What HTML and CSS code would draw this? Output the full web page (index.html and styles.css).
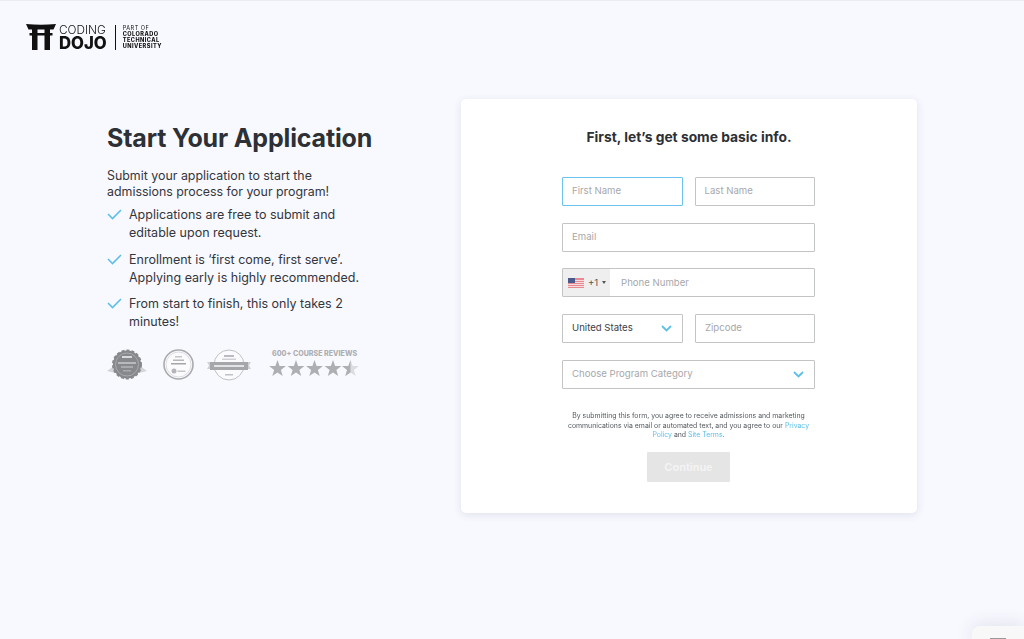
FILE: index.html
```html
<!DOCTYPE html>
<html lang="en">
<head>
  <meta charset="UTF-8">
  <title>Start Your Application | Coding Dojo</title>
  <link rel="stylesheet" href="styles.css">
</head>
<body>
  <header class="top">
    <div class="logo">
      <svg class="torii" width="30" height="26" viewBox="0 0 30 26">
        <path d="M0 0Q15 1.500 30 0L27.500 5.500H2.500Z" fill="#111"/>
        <rect x="3.500" y="9" width="23" height="2.500" fill="#111"/>
        <rect x="6" y="5" width="5.500" height="21" fill="#111"/>
        <rect x="18.500" y="5" width="5.500" height="21" fill="#111"/>
      </svg>
      <div class="logo-name">
        <span class="logo-coding">CODING</span>
        <span class="logo-dojo">DOJO</span>
      </div>
      <div class="logo-part">
        <span class="logo-of">PART OF</span>
        <span>COLORADO</span>
        <span>TECHNICAL</span>
        <span>UNIVERSITY</span>
      </div>
    </div>
  </header>

  <main class="main">
    <section class="intro">
      <h1>Start Your Application</h1>
      <p class="lead">Submit your application to start the admissions process for your program!</p>
      <ul class="checks">
        <li>
          <svg class="tick" width="15" height="11" viewBox="0 0 15 11"><path d="M1 5L5.500 9.500L14 1" fill="none" stroke="#5dbfe8" stroke-width="1.600"/></svg>
          <span>Applications are free to submit and editable upon request.</span>
        </li>
        <li>
          <svg class="tick" width="15" height="11" viewBox="0 0 15 11"><path d="M1 5L5.500 9.500L14 1" fill="none" stroke="#5dbfe8" stroke-width="1.600"/></svg>
          <span>Enrollment is ‘first come, first serve’. Applying early is highly recommended.</span>
        </li>
        <li>
          <svg class="tick" width="15" height="11" viewBox="0 0 15 11"><path d="M1 5L5.500 9.500L14 1" fill="none" stroke="#5dbfe8" stroke-width="1.600"/></svg>
          <span>From start to finish, this only takes 2 minutes!</span>
        </li>
      </ul>
      <div class="badges">
        <svg width="40" height="32" viewBox="0 0 40 32">
          <path d="M0 22L7 17L7 10L15 16L12 25ZM40 22L33 17L33 10L25 16L28 25Z" fill="#d3d4d8"/>
          <circle cx="20" cy="15.500" r="14" fill="#87888c" stroke="#87888c" stroke-width="2" stroke-dasharray="3 2"/>
          <circle cx="20" cy="15.500" r="11.500" fill="none" stroke="#a9aaae" stroke-width="1"/>
          <rect x="15" y="7" width="10" height="2" fill="#d8d9dc"/>
          <rect x="11" y="13" width="18" height="2" fill="#b8b9bc"/>
          <rect x="14" y="17" width="12" height="2" fill="#a9aaae"/>
          <rect x="16" y="21" width="8" height="1.500" fill="#a9aaae"/>
        </svg>
        <svg width="31" height="31" viewBox="0 0 31 31">
          <circle cx="15.500" cy="15.500" r="14.500" fill="#fbfbfd" stroke="#a9aaae" stroke-width="1.600"/>
          <circle cx="15.500" cy="15.500" r="12.500" fill="none" stroke="#dcdde0" stroke-width="1"/>
          <rect x="12" y="7" width="7" height="1.500" fill="#c5c6ca"/>
          <rect x="10" y="10.500" width="11" height="1.500" fill="#b5b6ba"/>
          <rect x="8" y="14" width="15" height="1.500" fill="#a5a6aa"/>
          <circle cx="11" cy="22" r="2.500" fill="#b5b6ba"/>
          <rect x="14.500" y="21.500" width="8" height="1.500" fill="#c5c6ca"/>
        </svg>
        <svg width="44" height="32" viewBox="0 0 44 32">
          <circle cx="22" cy="16" r="15" fill="#fbfbfd" stroke="#c0c1c5" stroke-width="1"/>
          <rect x="17" y="6" width="10" height="2" fill="#bbbcc0"/>
          <rect x="15" y="9.500" width="14" height="1.500" fill="#d0d1d5"/>
          <path d="M0 13H5V20H0L2 16.500Z" fill="#d0d1d5"/>
          <path d="M44 13H39V20H44L42 16.500Z" fill="#d0d1d5"/>
          <rect x="3" y="13" width="38" height="8" fill="#a5a6aa"/>
          <rect x="7" y="16" width="30" height="2" fill="#e2e3e6"/>
          <rect x="18" y="25" width="8" height="1.500" fill="#c0c1c5"/>
        </svg>
        <div class="reviews">
          <span class="reviews-title">600+ COURSE REVIEWS</span>
          <div class="stars">
            <svg width="90" height="17" viewBox="0 0 90 17">
              <defs>
                <path id="star" d="M8.500 0L10.600 5.900L16.900 6.100L11.900 9.900L13.700 16L8.500 12.400L3.300 16L5.100 9.900L0.100 6.100L6.400 5.900Z"/>
                <clipPath id="half"><rect x="0" y="0" width="8.500" height="17"/></clipPath>
              </defs>
              <use href="#star" x="0" fill="#aeafb3"/>
              <use href="#star" x="18.500" fill="#aeafb3"/>
              <use href="#star" x="37" fill="#aeafb3"/>
              <use href="#star" x="55.500" fill="#aeafb3"/>
              <use href="#star" x="73" fill="#dcdde0"/>
              <g transform="translate(73 0)"><use href="#star" fill="#aeafb3" clip-path="url(#half)"/></g>
            </svg>
          </div>
        </div>
      </div>
    </section>

    <section class="card">
      <h2>First, let’s get some basic info.</h2>
      <form class="form">
        <div class="row">
          <div class="field focus"><span class="ph">First Name</span></div>
          <div class="field"><span class="ph">Last Name</span></div>
        </div>
        <div class="field"><span class="ph">Email</span></div>
        <div class="field phone">
          <div class="dial">
            <svg width="16" height="10" viewBox="0 0 16 10">
              <rect width="16" height="10" fill="#e58b91"/>
              <rect y="2" width="16" height="1" fill="#f6dcdd"/>
              <rect y="4" width="16" height="1" fill="#f6dcdd"/>
              <rect y="6" width="16" height="1" fill="#f6dcdd"/>
              <rect y="8" width="16" height="1" fill="#f6dcdd"/>
              <rect width="7" height="5" fill="#4a5a8c"/>
            </svg>
            <span class="dial-code">+1</span>
            <span class="dial-caret"></span>
          </div>
          <span class="ph">Phone Number</span>
        </div>
        <div class="row">
          <div class="field select">
            <span class="val">United States</span>
            <svg width="11" height="7" viewBox="0 0 11 7"><path d="M1 1L5.500 5.500L10 1" fill="none" stroke="#5dbfe8" stroke-width="1.800"/></svg>
          </div>
          <div class="field"><span class="ph">Zipcode</span></div>
        </div>
        <div class="field select">
          <span class="ph">Choose Program Category</span>
          <svg width="11" height="7" viewBox="0 0 11 7"><path d="M1 1L5.500 5.500L10 1" fill="none" stroke="#5dbfe8" stroke-width="1.800"/></svg>
        </div>
        <p class="legal">By submitting this form, you agree to receive admissions and marketing communications via email or automated text, and you agree to our <a href="#">Privacy Policy</a> and <a href="#">Site Terms</a>.</p>
        <button class="continue" type="button" disabled>Continue</button>
      </form>
    </section>
  </main>

  <div class="corner"><span></span></div>
</body>
</html>
```

FILE: styles.css
```css
* {
  box-sizing: border-box;
}
html, body {
  height: 100%;
}
body {
  margin: 0;
  overflow: hidden;
  background: #f8f9ff;
  border-top: 1px solid #ebecf0;
  color: #33363b;
  font-family: "Inter", "Liberation Sans", sans-serif;
}
.top {
  padding: 23px 0 0 26px;
}
.logo {
  display: flex;
  align-items: center;
  height: 26px;
  color: #111;
  will-change: opacity;
}
.torii {
  flex: none;
}
.logo-name {
  display: flex;
  flex-direction: column;
  margin-left: 3px;
  padding-right: 8px;
  line-height: 1;
}
.logo-coding {
  font-size: 11.800px;
  font-weight: 300;
  line-height: 12px;
}
.logo-dojo {
  font-size: 16.700px;
  font-weight: 800;
  line-height: 14px;
}
.logo-part {
  display: flex;
  flex-direction: column;
  height: 25px;
  padding-left: 7px;
  border-left: 1px solid #111;
  font-size: 5.600px;
  font-weight: 800;
  letter-spacing: 0.45px;
  line-height: 6.300px;
}
.logo-of {
  font-weight: 400;
}

.main {
  display: flex;
  align-items: flex-start;
  padding: 49px 0 0 107px;
}
.intro {
  width: 354px;
  padding-top: 23px;
}
h1 {
  margin: 0 0 14px;
  font-size: 25px;
  font-weight: 700;
  letter-spacing: -0.15px;
  line-height: 32px;
  color: #2d3035;
}
.lead {
  width: 240px;
  margin: 0;
  font-size: 12.400px;
  line-height: 16px;
}
.checks {
  width: 262px;
  margin: 0;
  padding: 0;
  list-style: none;
}
.checks li {
  display: flex;
  margin-top: 8px;
  font-size: 12.500px;
  line-height: 18.250px;
}
.checks li:first-child {
  margin-top: 6px;
}
.tick {
  flex: none;
  margin: 3px 7px 0 0;
}
.badges {
  display: flex;
  align-items: center;
  margin-top: 17px;
}
.badges > svg:nth-child(1) {
  margin-right: 16px;
}
.badges > svg:nth-child(2) {
  margin-right: 13px;
}
.badges > svg:nth-child(3) {
  margin-right: 18px;
}
.reviews {
  display: flex;
  flex-direction: column;
  margin-top: -3px;
}
.reviews-title {
  margin-left: 3px;
  font-size: 7.100px;
  font-weight: 800;
  line-height: 9px;
  white-space: nowrap;
  color: #aeafb3;
}
.stars {
  height: 17px;
  margin-top: 2px;
}

.card {
  width: 456px;
  height: 414px;
  padding-top: 28px;
  background: #fff;
  border-radius: 5px;
  box-shadow: 0 2px 8px rgba(60, 65, 90, 0.12);
}
h2 {
  margin: 0 0 30px;
  text-align: center;
  font-size: 13.800px;
  font-weight: 700;
  line-height: 20px;
  color: #2d3035;
}
.form {
  display: flex;
  flex-direction: column;
  gap: 16.700px;
  width: 253px;
  margin-left: 101px;
}
.row {
  display: flex;
  gap: 12px;
}
.row .field {
  flex: 1;
}
.field {
  display: flex;
  align-items: center;
  height: 29px;
  padding: 0 9px 1.500px;
  border: 1px solid #c3c4c6;
  border-radius: 1px;
  font-size: 9.600px;
  background: #fff;
}
.focus {
  border-color: #6cc4ee;
}
.ph {
  color: #a6a8ab;
}
.val {
  color: #3d4045;
}
.select {
  justify-content: space-between;
  padding-right: 10px;
}
.select svg {
  margin-top: 2px;
}
.phone {
  padding: 0;
}
.dial {
  display: flex;
  align-items: center;
  width: 47px;
  height: 100%;
  margin-right: 11px;
  padding-left: 5px;
  background: #efefef;
  color: #555;
}
.dial-code {
  margin-left: 4px;
}
.dial-caret {
  width: 0;
  height: 0;
  margin-left: 4px;
  border-left: 2px solid transparent;
  border-right: 2px solid transparent;
  border-top: 3px solid #555;
}
.legal {
  margin: 6px 0 0;
  text-align: center;
  font-size: 6.900px;
  line-height: 9.300px;
  color: #55585d;
  will-change: opacity;
}
.legal a {
  color: #5dbfe8;
  text-decoration: none;
}
.continue {
  align-self: center;
  width: 83px;
  height: 30px;
  margin-top: -4px;
  border: 0;
  border-radius: 1px;
  background: #e5e5e5;
  color: #f4f4f4;
  font-family: inherit;
  font-size: 11px;
  font-weight: 600;
}
.corner {
  position: fixed;
  right: 0;
  bottom: 0;
  display: flex;
  justify-content: center;
  align-items: flex-end;
  width: 52px;
  height: 13px;
  background: #f8f8f8;
  border-radius: 8px 0 0 0;
  box-shadow: 0 0 18px rgba(60, 65, 90, 0.16);
}
.corner span {
  width: 16px;
  height: 1px;
  background: #999;
}
```
